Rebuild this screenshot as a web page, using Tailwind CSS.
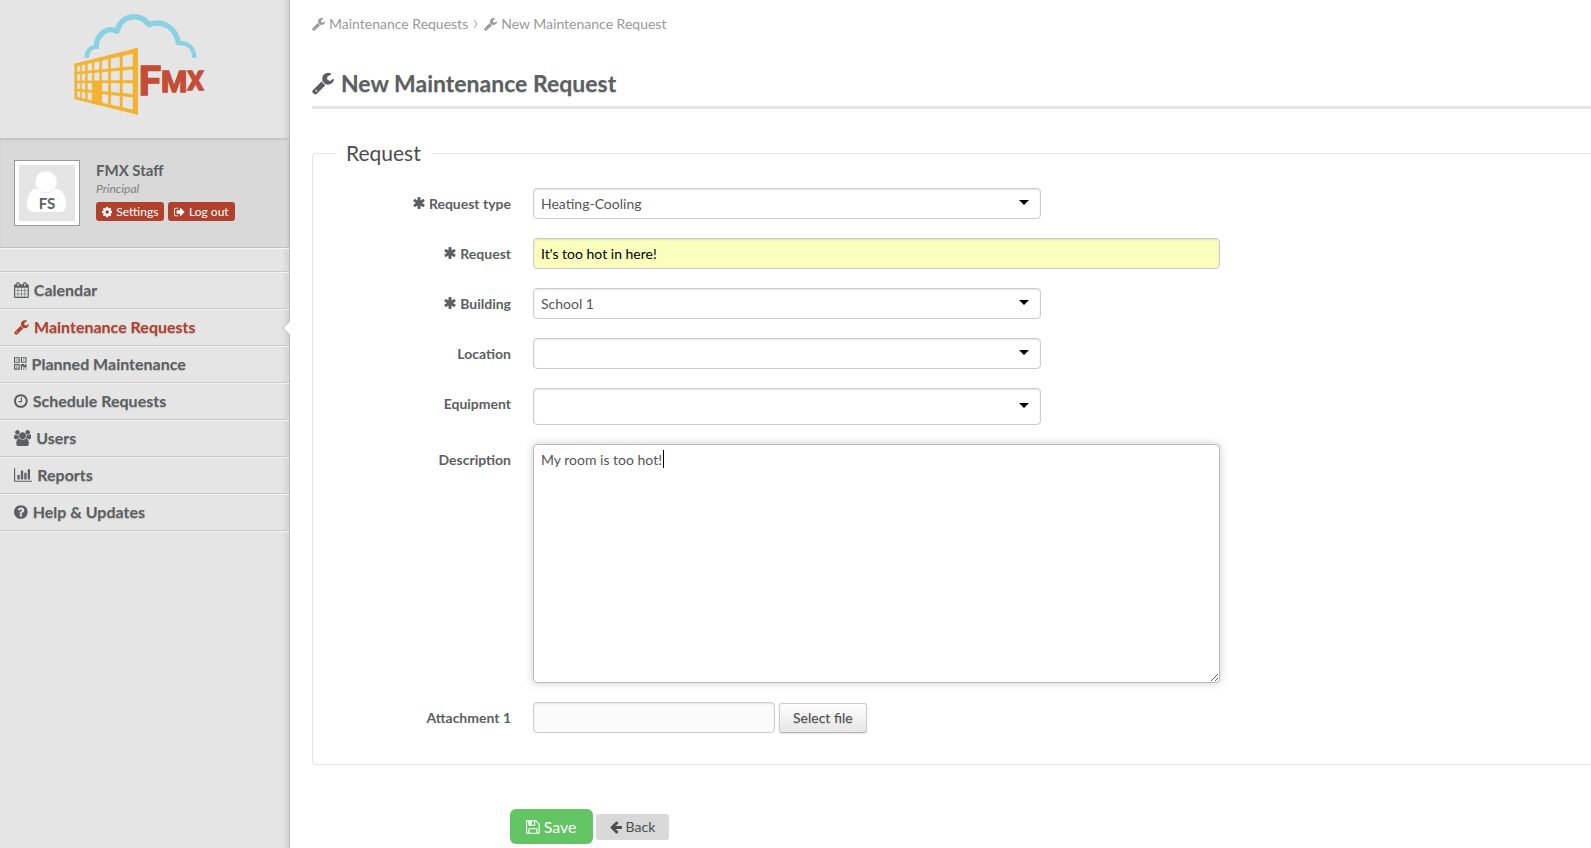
<!DOCTYPE html>
<html lang="en">
<head>
    <meta charset="UTF-8">
    <meta name="viewport" content="width=device-width, initial-scale=1.0">
    <title>FMX - New Maintenance Request</title>
    <script src="https://cdn.jsdelivr.net/npm/@tailwindcss/browser@4"></script>
</head>
<body class="bg-white font-['Lato',sans-serif] text-sm leading-5 text-[#5c5f61]">
    <!-- Icon sprite -->
    <svg class="hidden" aria-hidden="true">
        <symbol id="wrench" viewBox="64 0 1664 1792"><path d="M448 1472q0-26-19-45t-45-19-45 19-19 45 19 45 45 19 45-19 19-45zm644-420l-682 682q-37 37-90 37-52 0-91-37l-106-108q-38-36-38-90 0-53 38-91l681-681q39 98 114.5 173.5t173.5 114.5zm634-435q0 39-23 106-47 134-164.5 217.5t-258.5 83.5q-185 0-316.5-131.5t-131.5-316.5 131.5-316.5 316.5-131.5q58 0 121.5 16.5t107.5 46.5q16 11 16 28t-16 28l-293 169v224l193 107q5-3 79-48.5t135.5-81 70.5-35.5q15 0 23.5 10t8.5 25z"/></symbol>
        <symbol id="asterisk" viewBox="128 0 1536 1792"><path d="M1546 1050q46 26 59.5 77.5t-12.5 97.5l-64 110q-26 46-77.5 59.5t-97.5-12.5l-266-153v307q0 52-38 90t-90 38h-128q-52 0-90-38t-38-90v-307l-266 153q-46 26-97.5 12.5t-77.5-59.5l-64-110q-26-46-12.5-97.5t59.5-77.5l266-154-266-154q-46-26-59.5-77.5t12.5-97.5l64-110q26-46 77.5-59.5t97.5 12.5l266 153v-307q0-52 38-90t90-38h128q52 0 90 38t38 90v307l266-153q46-26 97.5-12.5t77.5 59.5l64 110q26 46 12.5 97.5t-59.5 77.5l-266 154z"/></symbol>
        <symbol id="caret" viewBox="0 0 10 5"><path d="M0 0h10L5 5z"/></symbol>
    </svg>

    <div class="flex min-h-screen">
        <!-- Sidebar -->
        <aside class="w-[290px] shrink-0 border-r border-[#bdbdbd] bg-[#e5e5e5] bg-[linear-gradient(to_left,#d2d2d2,#e5e5e5_7px)]">
            <a href="#" class="flex h-[138px] items-start px-[74px] pt-[13px]" aria-label="FMX home">
                <svg class="h-[103px] w-[132px]" viewBox="72 39 396 309">
                    <path fill="none" stroke="#89d2e4" stroke-width="13" d="M110 174Q110 145 138 140"/>
                    <path fill="none" stroke="#89d2e4" stroke-width="16" stroke-linejoin="round" d="M139 147C136 105 170 78 201 94C215 42 270 38 297 74C345 56 382 92 386 134"/>
                    <path fill="none" stroke="#89d2e4" stroke-width="13" d="M384 130C415 125 434 148 433 174"/>
                    <clipPath id="wall"><path d="M73 191L264 143V345L73 297z"/></clipPath>
                    <g clip-path="url(#wall)" fill="#f2b430" stroke="#f2b430" stroke-width="1.5">
                        <path d="M73 130h8v220h-8zM91 130h4v220h-4zM106 130h6v220h-6zM127 130h5v220h-5zM149 130h6v220h-6zM175 130h7v220h-7zM210 130h7v220h-7zM249 130h15v220h-15z"/>
                        <path d="M73 191L264 143V157L73 200zM73 217L264 198V207L73 223zM73 243L264 241V249L73 248zM73 266L264 284V293L73 272zM73 290L264 333V345L73 297z"/>
                        <path d="M127 244h28v80h-28z"/>
                    </g>
                    <text class="font-['Roboto',sans-serif] font-bold" x="266" y="284" fill="#c34d35" stroke="#c34d35" stroke-width="4"><tspan font-size="122">F</tspan><tspan font-size="90" dy="-9">M</tspan><tspan font-size="78" dy="-5">X</tspan></text>
                </svg>
            </a>

            <div class="flex h-[110px] gap-4 border-y border-[#c2c2c2] bg-[#d9d9d9] bg-[linear-gradient(to_left,#c8c8c8,#d9d9d9_3px)] px-[14px] pt-[21px] shadow-[0_1px_0_#f5f5f5,inset_0_1px_2px_#c4c4c4]">
                <div class="size-[66px] border border-[#999] bg-white p-1">
                    <div class="relative h-full bg-[#e5e5e5]">
                        <svg class="size-full" viewBox="0 0 56 56" fill="#fff">
                            <path d="M15 24h24c5 2 8 8 8 15 0 5-2 8-6 8H14c-4 0-6-3-6-8 0-7 3-13 7-15z"/>
                            <circle cx="27" cy="17" r="11" stroke="#ececec"/>
                        </svg>
                        <span class="absolute inset-x-0 bottom-2 text-center text-[15px] font-bold">FS</span>
                    </div>
                </div>
                <div>
                    <div class="text-[15px] font-bold">FMX Staff</div>
                    <div class="text-xs leading-[18px] text-[#808080] italic">Principal</div>
                    <div class="mt-1 flex gap-1 text-xs text-white">
                        <a href="#" class="flex h-[19px] items-center gap-1 rounded-[3px] bg-[#b0412c] px-[6px]">
                            <svg class="h-3" viewBox="128 0 1536 1792" fill="currentColor"><path d="M1152 896q0-106-75-181t-181-75-181 75-75 181 75 181 181 75 181-75 75-181zm512-109v222q0 12-8 23t-20 13l-185 28q-19 54-39 91 35 50 107 138 10 12 10 25t-9 23q-27 37-99 108t-94 71q-12 0-26-9l-138-108q-44 23-91 38-16 136-29 186-7 28-36 28h-222q-14 0-24.5-8.5t-11.5-21.5l-28-184q-49-16-90-37l-141 107q-10 9-25 9-14 0-25-11-126-114-165-168-7-10-7-23 0-12 8-23 15-21 51-66.5t54-70.5q-27-50-41-99l-183-27q-13-2-21-12.5t-8-23.5v-222q0-12 8-23t19-13l186-28q14-46 39-92-40-57-107-138-10-12-10-24 0-10 9-23 26-36 98.5-107.5t94.5-71.5q13 0 26 10l138 107q44-23 91-38 16-136 29-186 7-28 36-28h222q14 0 24.5 8.5t11.5 21.5l28 184q49 16 90 37l142-107q9-9 24-9 13 0 25 10 129 119 165 170 7 8 7 22 0 12-8 23-15 21-51 66.5t-54 70.5q26 50 41 98l183 28q13 2 21 12.5t8 23.5z"/></svg>
                            Settings
                        </a>
                        <a href="#" class="flex h-[19px] items-center gap-1 rounded-[3px] bg-[#b0412c] px-[6px]">
                            <svg class="h-3" viewBox="64 0 1600 1792" fill="currentColor"><path d="M704 1440q0 4 1 20t.5 26.5-3 23.5-10 19.5-20.5 6.5h-320q-119 0-203.5-84.5t-84.5-203.5v-704q0-119 84.5-203.5t203.5-84.5h320q13 0 22.5 9.5t9.5 22.5q0 4 1 20t.5 26.5-3 23.5-10 19.5-20.5 6.5h-320q-66 0-113 47t-47 113v704q0 66 47 113t113 47h312l11.5 1 11.5 3 8 5.5 7 9 2 13.5zm928-544q0 26-19 45l-544 544q-19 19-45 19t-45-19-19-45v-288h-448q-26 0-45-19t-19-45v-384q0-26 19-45t45-19h448v-288q0-26 19-45t45-19 45 19l544 544q19 19 19 45z"/></svg>
                            Log out
                        </a>
                    </div>
                </div>
            </div>

            <nav class="mt-[23px] text-base font-bold text-shadow-[0_1px_1px_#bbb]">
                <ul class="border-t border-[#c9c9c9]">
                    <li class="h-[37px] border-t border-b border-t-[#f3f3f3] border-b-[#c9c9c9]">
                        <a href="#" class="flex h-full items-center gap-[5px] px-[14px] pb-[2px]">
                            <svg class="h-4" viewBox="64 0 1664 1792" fill="currentColor"><path d="M192 1664h288v-288h-288v288zm352 0h320v-288h-320v288zm-352-352h288v-320h-288v320zm352 0h320v-320h-320v320zm-352-384h288v-288h-288v288zm736 736h320v-288h-320v288zm-384-736h320v-288h-320v288zm768 736h288v-288h-288v288zm-384-352h320v-320h-320v320zm-352-864v-288q0-13-9.5-22.5t-22.5-9.5h-64q-13 0-22.5 9.5t-9.5 22.5v288q0 13 9.5 22.5t22.5 9.5h64q13 0 22.5-9.5t9.5-22.5zm736 864h288v-320h-288v320zm-384-384h320v-288h-320v288zm384 0h288v-288h-288v288zm32-480v-288q0-13-9.5-22.5t-22.5-9.5h-64q-13 0-22.5 9.5t-9.5 22.5v288q0 13 9.5 22.5t22.5 9.5h64q13 0 22.5-9.5t9.5-22.5zm384-64v1280q0 52-38 90t-90 38h-1408q-52 0-90-38t-38-90v-1280q0-52 38-90t90-38h128v-96q0-66 47-113t113-47h64q66 0 113 47t47 113v96h384v-96q0-66 47-113t113-47h64q66 0 113 47t47 113v96h128q52 0 90 38t38 90z"/></svg>
                            Calendar
                        </a>
                    </li>
                    <li class="relative h-[37px] border-t border-b border-t-[#f3f3f3] border-b-[#c9c9c9]">
                        <a href="#" aria-current="page" class="flex h-full items-center gap-[5px] px-[14px] pb-[2px] text-[#b0412c]">
                            <svg class="h-4 w-[15px]" fill="currentColor"><use href="#wrench"/></svg>
                            Maintenance Requests
                        </a>
                        <svg class="absolute top-[11px] -right-px h-[14px] w-[7px]" viewBox="0 0 7 14"><path d="M7 0L0 7l7 7z" fill="#fff"/><path d="M7 0L0 7l7 7" fill="none" stroke="#bdbdbd"/></svg>
                    </li>
                    <li class="h-[37px] border-t border-b border-t-[#f3f3f3] border-b-[#c9c9c9]">
                        <a href="#" class="flex h-full items-center gap-[5px] px-[14px] pb-[2px]">
                            <svg class="h-4" viewBox="192 0 1408 1792" fill="currentColor"><path d="M576 1152v128h-128v-128h128zm0-768v128h-128v-128h128zm768 0v128h-128v-128h128zm-1024 1023h384v-383h-384v383zm0-767h384v-384h-384v384zm768 0h384v-384h-384v384zm-256 256v640h-640v-640h640zm512 512v128h-128v-128h128zm256 0v128h-128v-128h128zm0-512v384h-384v-128h-128v384h-128v-640h384v128h128v-128h128zm-768-768v640h-640v-640h640zm768 0v640h-640v-640h640z"/></svg>
                            Planned Maintenance
                        </a>
                    </li>
                    <li class="h-[37px] border-t border-b border-t-[#f3f3f3] border-b-[#c9c9c9]">
                        <a href="#" class="flex h-full items-center gap-[5px] px-[14px] pb-[2px]">
                            <svg class="h-4" viewBox="128 0 1536 1792" fill="currentColor"><path d="M1024 544v448q0 14-9 23t-23 9h-320q-14 0-23-9t-9-23v-64q0-14 9-23t23-9h224v-352q0-14 9-23t23-9h64q14 0 23 9t9 23zm416 352q0-148-73-273t-198-198-273-73-273 73-198 198-73 273 73 273 198 198 273 73 273-73 198-198 73-273zm224 0q0 209-103 385.5t-279.5 279.5-385.5 103-385.5-103-279.5-279.5-103-385.5 103-385.5 279.5-279.5 385.5-103 385.5 103 279.5 279.5 103 385.5z"/></svg>
                            Schedule Requests
                        </a>
                    </li>
                    <li class="h-[37px] border-t border-b border-t-[#f3f3f3] border-b-[#c9c9c9]">
                        <a href="#" class="flex h-full items-center gap-[5px] px-[14px] pb-[2px]">
                            <svg class="h-4" viewBox="64 0 1920 1792" fill="currentColor"><path d="M657 896q-162 5-265 128h-134q-82 0-138-40.5t-56-118.5q0-353 124-353 6 0 43.5 21t97.5 42.5 119 21.5q67 0 133-23-5 37-5 66 0 159 93 293zm1071 637q0 120-73 189.5t-194 69.5h-874q-121 0-194-69.5t-73-189.5q0-53 3.5-103.5t14-109 26.5-108.5 43-97.5 62-81 85.5-53.5 111.5-20q10 0 43 21.5t73 48 107 48 135 21.5 135-21.5 107-48 73-48 43-21.5q61 0 111.5 20t85.5 53.5 62 81 43 97.5 26.5 108.5 14 109 3.5 103.5zm-1024-1277q0 106-75 181t-181 75-181-75-75-181 75-181 181-75 181 75 75 181zm704 384q0 159-112.5 271.5t-271.5 112.5-271.5-112.5-112.5-271.5 112.5-271.5 271.5-112.5 271.5 112.5 112.5 271.5zm576 225q0 78-56 118.5t-138 40.5h-134q-103-123-265-128 93-134 93-293 0-29-5-66 66 23 133 23 59 0 119-21.5t97.5-42.5 43.5-21q124 0 124 353zm-128-609q0 106-75 181t-181 75-181-75-75-181 75-181 181-75 181 75 75 181z"/></svg>
                            Users
                        </a>
                    </li>
                    <li class="h-[37px] border-t border-b border-t-[#f3f3f3] border-b-[#c9c9c9]">
                        <a href="#" class="flex h-full items-center gap-[5px] px-[14px] pb-[2px]">
                            <svg class="h-4" viewBox="0 0 2048 1792" fill="currentColor"><path d="M640 896v512h-256v-512h256zm384-512v1024h-256v-1024h256zm1024 1152v128h-2048v-1536h128v1408h1920zm-640-896v768h-256v-768h256zm384-384v1152h-256v-1152h256z"/></svg>
                            Reports
                        </a>
                    </li>
                    <li class="h-[37px] border-t border-b border-t-[#f3f3f3] border-b-[#c9c9c9] shadow-[0_1px_0_#f3f3f3]">
                        <a href="#" class="flex h-full items-center gap-[5px] px-[14px] pb-[2px]">
                            <svg class="h-4" viewBox="128 0 1536 1792" fill="currentColor"><path d="M1024 1376v-192q0-14-9-23t-23-9h-192q-14 0-23 9t-9 23v192q0 14 9 23t23 9h192q14 0 23-9t9-23zm256-672q0-88-55.5-163t-138.5-116-170-41q-243 0-371 213-15 24 8 42l132 100q7 6 19 6 16 0 25-12 53-68 86-92 34-24 86-24 48 0 85.5 26t37.5 59q0 38-20 61t-68 45q-63 28-115.5 86.5t-52.5 125.5v36q0 14 9 23t23 9h192q14 0 23-9t9-23q0-19 21.5-49.5t54.5-49.5q32-18 49-28.5t46-35 44.5-48 28-60.5 12.5-81zm384 192q0 209-103 385.5t-279.5 279.5-385.5 103-385.5-103-279.5-279.5-103-385.5 103-385.5 279.5-279.5 385.5-103 385.5 103 279.5 279.5 103 385.5z"/></svg>
                            Help &amp; Updates
                        </a>
                    </li>
                </ul>
            </nav>
        </aside>

        <!-- Content -->
        <main class="min-w-0 flex-1 pt-[14px] pl-[22px]">
            <nav class="flex items-center text-[#999]" aria-label="Breadcrumb">
                <a href="#" class="flex items-center gap-1"><svg class="h-[14px] w-[13px]" fill="currentColor"><use href="#wrench"/></svg>Maintenance Requests</a>
                <svg class="mx-[6px] h-2 w-1" viewBox="0 0 4 8" fill="none" stroke="currentColor"><path d="M0 0l3 4-3 4"/></svg>
                <a href="#" class="flex items-center gap-1"><svg class="h-[14px] w-[13px]" fill="currentColor"><use href="#wrench"/></svg>New Maintenance Request</a>
            </nav>

            <h1 class="mt-[33px] flex items-center gap-[7px] border-b-3 border-[#e5e5e5] pb-[7px] text-[23px] leading-8 font-bold text-shadow-[0_1px_1px_#ccc]">
                <svg class="h-6 w-[22px]" fill="currentColor"><use href="#wrench"/></svg>
                New Maintenance Request
            </h1>

            <form>
                <fieldset class="mt-[30px] flex flex-col gap-[19px] rounded-l border border-r-0 border-[#e5e5e5] pt-[21px] pb-[31px]">
                    <legend class="ml-[22px] px-[11px] text-[21px] leading-7 text-[#4d4d4d]">Request</legend>

                    <div class="flex gap-[22px]">
                        <label for="type" class="flex w-[198px] shrink-0 items-start justify-end gap-1 pt-[6px] font-bold"><svg class="mt-[2px] h-[14px] w-3" fill="currentColor"><use href="#asterisk"/></svg>Request type</label>
                        <div class="relative w-full max-w-[508px]">
                            <select id="type" class="block h-[31px] w-full appearance-none rounded border border-[#ccc] bg-white px-[7px] text-[#555] shadow-[inset_0_1px_2px_#e5e5e5]"><option>Heating-Cooling</option></select>
                            <svg class="pointer-events-none absolute top-3 right-3 h-[5px] w-[10px]" fill="#000"><use href="#caret"/></svg>
                        </div>
                    </div>

                    <div class="flex gap-[22px]">
                        <label for="request" class="flex w-[198px] shrink-0 items-start justify-end gap-1 pt-[6px] font-bold"><svg class="mt-[2px] h-[14px] w-3" fill="currentColor"><use href="#asterisk"/></svg>Request</label>
                        <input id="request" type="text" value="It's too hot in here!" class="h-[31px] w-full max-w-[687px] rounded border border-[#ccc] bg-[#faffbd] px-[7px] text-black shadow-[inset_0_1px_2px_#e0e4b0]">
                    </div>

                    <div class="flex gap-[22px]">
                        <label for="building" class="flex w-[198px] shrink-0 items-start justify-end gap-1 pt-[6px] font-bold"><svg class="mt-[2px] h-[14px] w-3" fill="currentColor"><use href="#asterisk"/></svg>Building</label>
                        <div class="relative w-full max-w-[508px]">
                            <select id="building" class="block h-[31px] w-full appearance-none rounded border border-[#ccc] bg-white px-[7px] text-[#555] shadow-[inset_0_1px_2px_#e5e5e5]"><option>School 1</option></select>
                            <svg class="pointer-events-none absolute top-3 right-3 h-[5px] w-[10px]" fill="#000"><use href="#caret"/></svg>
                        </div>
                    </div>

                    <div class="flex gap-[22px]">
                        <label for="location" class="w-[198px] shrink-0 pt-[6px] text-right font-bold">Location</label>
                        <div class="relative w-full max-w-[508px]">
                            <select id="location" class="block h-[31px] w-full appearance-none rounded border border-[#ccc] bg-white px-[7px] text-[#555] shadow-[inset_0_1px_2px_#e5e5e5]"><option></option></select>
                            <svg class="pointer-events-none absolute top-3 right-3 h-[5px] w-[10px]" fill="#000"><use href="#caret"/></svg>
                        </div>
                    </div>

                    <div class="flex gap-[22px]">
                        <label for="equipment" class="w-[198px] shrink-0 pt-[6px] text-right font-bold">Equipment</label>
                        <div class="relative w-full max-w-[508px]">
                            <select id="equipment" class="block h-[37px] w-full appearance-none rounded border border-[#ccc] bg-white px-[7px] text-[#555] shadow-[inset_0_1px_2px_#e5e5e5]"><option></option></select>
                            <svg class="pointer-events-none absolute top-[15px] right-3 h-[5px] w-[10px]" fill="#000"><use href="#caret"/></svg>
                        </div>
                    </div>

                    <div class="flex gap-[22px]">
                        <label for="description" class="w-[198px] shrink-0 pt-[6px] text-right font-bold">Description</label>
                        <div class="relative w-full max-w-[687px]">
                            <textarea id="description" class="block h-[239px] w-full resize rounded border border-[#bbb] bg-white px-[7px] py-[5px] text-[#555] shadow-[0_0_8px_#ccc]">My room is too hot!</textarea>
                            <span class="absolute top-[6px] left-[130px] h-[18px] w-px bg-black"></span>
                        </div>
                    </div>

                    <div class="flex gap-[22px]">
                        <label for="attachment" class="w-[198px] shrink-0 pt-[6px] text-right font-bold">Attachment 1</label>
                        <div class="flex items-end gap-1">
                            <input id="attachment" type="text" readonly class="h-[31px] w-[242px] rounded border border-[#ccc] bg-[#fbfbfb] px-[7px] shadow-[inset_0_1px_2px_#e5e5e5]">
                            <button type="button" class="h-[30px] rounded-[3px] border border-[#ccc] border-b-[#b3b3b3] bg-linear-to-b from-white to-[#e6e6e6] px-[13px] text-[#4d4d4d] shadow-[0_1px_2px_#e5e5e5] text-shadow-[0_1px_1px_#ccc]">Select file</button>
                        </div>
                    </div>
                </fieldset>

                <div class="mt-11 ml-[198px] flex items-center gap-[3px]">
                    <button type="submit" class="flex h-[35px] items-center gap-1 rounded-md bg-[#62c462] px-4 text-base text-white">
                        <svg class="h-4" viewBox="128 0 1536 1792" fill="currentColor"><path d="M512 1536h768v-384h-768v384zm896 0h128v-896q0-14-10-38.5t-20-34.5l-281-281q-10-10-34-20t-39-10v416q0 40-28 68t-68 28h-576q-40 0-68-28t-28-68v-416h-128v1280h128v-416q0-40 28-68t68-28h832q40 0 68 28t28 68v416zm-384-928v-320q0-13-9.5-22.5t-22.5-9.5h-192q-13 0-22.5 9.5t-9.5 22.5v320q0 13 9.5 22.5t22.5 9.5h192q13 0 22.5-9.5t9.5-22.5zm640 32v928q0 40-28 68t-68 28h-1344q-40 0-68-28t-28-68v-1344q0-40 28-68t68-28h928q40 0 88 20t76 48l280 280q28 28 48 76t20 88z"/></svg>
                        Save
                    </button>
                    <a href="#" class="flex h-[26px] items-center gap-1 rounded-[3px] bg-[#d9d9d9] px-[14px] text-[#4d4d4d]">
                        <svg class="h-[14px]" viewBox="128 0 1536 1792" fill="currentColor"><path d="M1664 896v128q0 53-32.5 90.5t-84.5 37.5h-704l293 294q38 36 38 90t-38 90l-75 76q-37 37-90 37-52 0-91-37l-651-652q-37-37-37-90 0-52 37-91l651-650q38-38 91-38 52 0 90 38l75 74q38 38 38 91t-38 91l-293 293h704q52 0 84.5 37.5t32.5 90.5z"/></svg>
                        Back
                    </a>
                </div>
            </form>
        </main>
    </div>
</body>
</html>
